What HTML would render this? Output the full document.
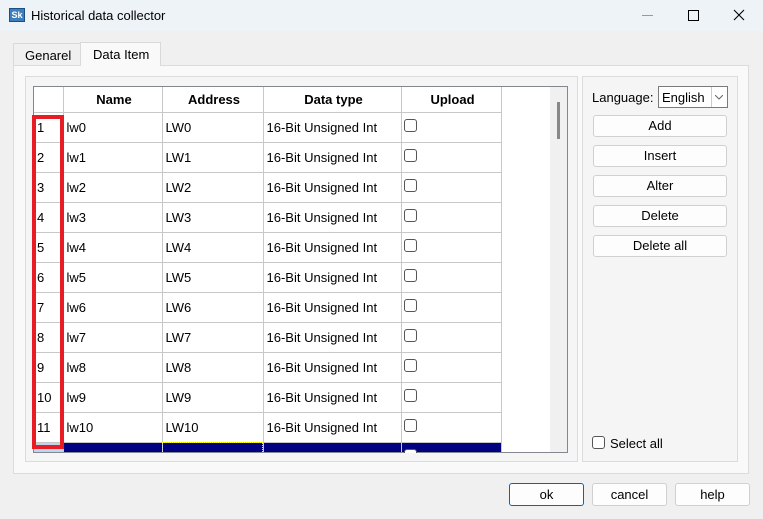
<!DOCTYPE html><html><head><style>
*{box-sizing:border-box;margin:0;padding:0}
body{width:763px;height:519px;overflow:hidden;background:#f0f0f0;font-family:"Liberation Sans",sans-serif;font-size:13px;color:#000;position:relative}
.a{position:absolute}
.btn{position:absolute;background:#fdfdfd;border:1px solid #d0d0d0;border-radius:3px;text-align:center;font-size:13px;line-height:20px}
.cb{position:absolute;width:13px;height:13px;border:1px solid #555;border-radius:3px;background:#fff}
table{border-collapse:collapse;position:absolute;left:34px;top:87px;table-layout:fixed}
td,th{border:1px solid #c8c8c8;height:30px;padding-left:3px;font-size:13px;text-align:left;white-space:nowrap;overflow:hidden}
th{height:25px;text-align:center;font-weight:bold;border-top:none;border-bottom:none}
</style></head><body>
<div class="a" style="left:0;top:0;width:763px;height:31px;background:#eef3f8"></div>
<div class="a" style="left:9px;top:8px;width:16px;height:14px;background:#3c7fc0;border:1px solid #1d4f80;color:#fff;font-size:9px;font-weight:bold;line-height:12px;text-align:center">Sk</div>
<div class="a" style="left:31px;top:8px;font-size:13px">Historical data collector</div>
<div class="a" style="left:642px;top:15px;width:11px;height:1px;background:#999"></div>
<div class="a" style="left:688px;top:10px;width:11px;height:11px;border:1px solid #000"></div>
<svg class="a" style="left:733px;top:9px" width="12" height="12"><path d="M1 1L11 11M11 1L1 11" stroke="#000" stroke-width="1.1"/></svg>
<div class="a" style="left:13px;top:43px;width:69px;height:22px;border:1px solid #d9d9d9;border-bottom:none;background:#f0f0f0"><span class="a" style="left:11px;top:4px">Genarel</span></div>
<div class="a" style="left:13px;top:65px;width:736px;height:409px;background:#f9f9f9;border:1px solid #dcdcdc"></div>
<div class="a" style="left:80px;top:42px;width:81px;height:24px;border:1px solid #d9d9d9;border-bottom:none;background:#f9f9f9"><span class="a" style="left:12px;top:4px">Data Item</span></div>
<div class="a" style="left:25px;top:76px;width:553px;height:386px;border:1px solid #dcdcdc;background:#f5f5f5"></div>
<div class="a" style="left:33px;top:86px;width:535px;height:367px;border:1px solid #828790;background:#fff;overflow:hidden">
<div class="a" style="right:0;top:0;width:17px;height:367px;background:#f0f0f0"></div>
<div class="a" style="right:7px;top:15px;width:3px;height:37px;background:#888"></div>
</div>
<div class="a" style="left:34px;top:87px;width:516px;height:365px;overflow:hidden">
<table style="left:0;top:0">
<colgroup><col style="width:29px"><col style="width:99px"><col style="width:101px"><col style="width:138px"><col style="width:100px"></colgroup>
<tr><th style="border-left:none"></th><th>Name</th><th>Address</th><th>Data type</th><th>Upload</th></tr>
<tr><td style="border-left:none">1</td><td>lw0</td><td>LW0</td><td>16-Bit Unsigned Int</td><td></td></tr>
<tr><td style="border-left:none">2</td><td>lw1</td><td>LW1</td><td>16-Bit Unsigned Int</td><td></td></tr>
<tr><td style="border-left:none">3</td><td>lw2</td><td>LW2</td><td>16-Bit Unsigned Int</td><td></td></tr>
<tr><td style="border-left:none">4</td><td>lw3</td><td>LW3</td><td>16-Bit Unsigned Int</td><td></td></tr>
<tr><td style="border-left:none">5</td><td>lw4</td><td>LW4</td><td>16-Bit Unsigned Int</td><td></td></tr>
<tr><td style="border-left:none">6</td><td>lw5</td><td>LW5</td><td>16-Bit Unsigned Int</td><td></td></tr>
<tr><td style="border-left:none">7</td><td>lw6</td><td>LW6</td><td>16-Bit Unsigned Int</td><td></td></tr>
<tr><td style="border-left:none">8</td><td>lw7</td><td>LW7</td><td>16-Bit Unsigned Int</td><td></td></tr>
<tr><td style="border-left:none">9</td><td>lw8</td><td>LW8</td><td>16-Bit Unsigned Int</td><td></td></tr>
<tr><td style="border-left:none">10</td><td>lw9</td><td>LW9</td><td>16-Bit Unsigned Int</td><td></td></tr>
<tr><td style="border-left:none">11</td><td>lw10</td><td>LW10</td><td>16-Bit Unsigned Int</td><td></td></tr>
<tr style="background:#000080;color:#fff"><td style="border-left:none;background:#bcd6ee;color:#000">12</td><td>lw11</td><td style="outline:1px dotted #ff0;outline-offset:-1px">LW11</td><td>16-Bit Unsigned Int</td><td></td></tr>
</table>
</div>
<div id="cbs"></div>
<div class="a" style="left:32px;top:115px;width:32px;height:334px;border:4px solid #e81c24"></div>
<div class="a" style="left:582px;top:76px;width:156px;height:386px;border:1px solid #dcdcdc;background:#f5f5f5"></div>
<div class="a" style="left:592px;top:90px">Language:</div>
<div class="a" style="left:658px;top:86px;width:70px;height:22px;border:1px solid #7a7a7a;background:#fff"><span class="a" style="left:3px;top:3px">English</span><div class="a" style="right:0;top:0;width:16px;height:20px;border-left:1px solid #ccc"></div><svg class="a" style="right:4px;top:8px" width="8" height="5"><path d="M0 0L4 4L8 0" stroke="#666" fill="none"/></svg></div>
<div class="btn" style="left:593px;top:115px;width:134px;height:22px">Add</div>
<div class="btn" style="left:593px;top:145px;width:134px;height:22px">Insert</div>
<div class="btn" style="left:593px;top:175px;width:134px;height:22px">Alter</div>
<div class="btn" style="left:593px;top:205px;width:134px;height:22px">Delete</div>
<div class="btn" style="left:593px;top:235px;width:134px;height:22px">Delete all</div>
<div class="cb" style="left:592px;top:436px"></div>
<div class="a" style="left:610px;top:436px">Select all</div>
<div class="btn" style="left:509px;top:483px;width:75px;height:23px;border:1px solid #0067c0;line-height:21px">ok</div>
<div class="btn" style="left:592px;top:483px;width:75px;height:23px;line-height:21px">cancel</div>
<div class="btn" style="left:675px;top:483px;width:75px;height:23px;line-height:21px">help</div>
<script>
var s='';for(var i=0;i<12;i++){s+='<div class="cb" style="left:404px;top:'+(119+i*30)+'px;'+(i==11?'height:4px;border-bottom:none;border-radius:3px 3px 0 0':'')+'"></div>';}
document.getElementById('cbs').innerHTML=s;
</script>
</body></html>
